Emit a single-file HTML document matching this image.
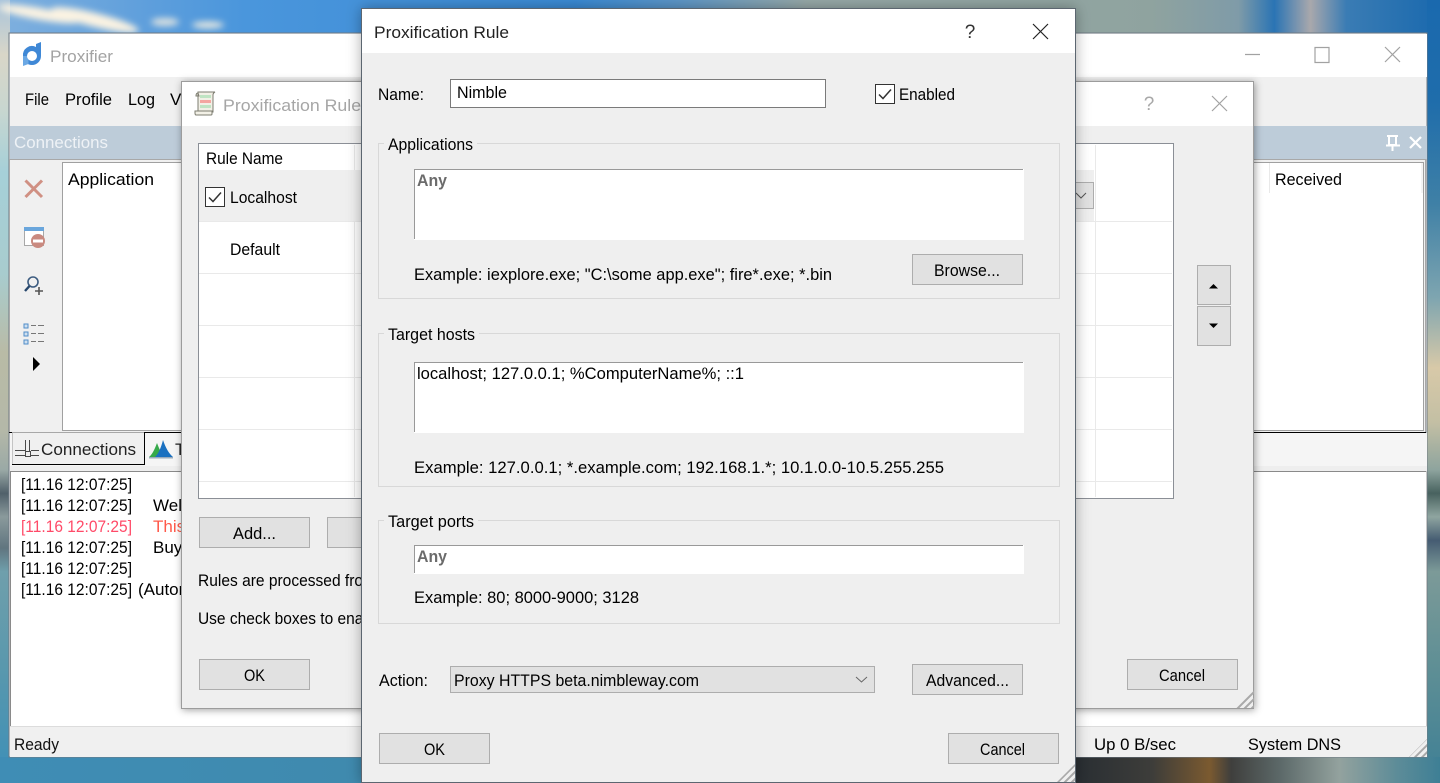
<!DOCTYPE html>
<html><head><meta charset="utf-8"><title>Proxifier</title>
<style>
html,body{margin:0;padding:0;width:1440px;height:783px;overflow:hidden;background:#3f8db5}
svg{display:block}
text{font-family:"Liberation Sans",sans-serif;font-size:17px;fill:#000}
.b{fill:#e1e1e1;stroke:#adadad;stroke-width:1;shape-rendering:crispEdges}
.l{stroke:#e9e9e9;stroke-width:1;shape-rendering:crispEdges}
.g{fill:none;stroke:#d8d8d8;stroke-width:1;shape-rendering:crispEdges}
.c{shape-rendering:crispEdges}
</style></head><body>
<svg width="1440" height="783" viewBox="0 0 1440 783" xmlns="http://www.w3.org/2000/svg">
<defs>
<linearGradient id="top"><stop offset="0" stop-color="#7fb0de"/><stop offset=".1" stop-color="#5f9fdc"/><stop offset=".17" stop-color="#4a96dc"/><stop offset=".4" stop-color="#3a8ad4"/><stop offset=".47" stop-color="#5c96c8"/><stop offset=".56" stop-color="#97a9a8"/><stop offset=".8" stop-color="#8fa39f"/><stop offset=".86" stop-color="#7f9ba8"/><stop offset=".885" stop-color="#2a74b4"/><stop offset=".91" stop-color="#a9a8ac"/><stop offset=".935" stop-color="#3a7cb4"/><stop offset="1" stop-color="#1a69ae"/></linearGradient>
<linearGradient id="left" x2="0" y2="1"><stop offset="0" stop-color="#a8c4dc"/><stop offset=".07" stop-color="#d9d6c8"/><stop offset=".14" stop-color="#c8d6d0"/><stop offset=".22" stop-color="#a6d0d8"/><stop offset=".35" stop-color="#a8ccce"/><stop offset=".45" stop-color="#b9bba6"/><stop offset=".55" stop-color="#b4b8a8"/><stop offset=".6" stop-color="#9aa9a6"/><stop offset=".63" stop-color="#50606a"/><stop offset=".66" stop-color="#8a9a9c"/><stop offset=".7" stop-color="#60757f"/><stop offset=".73" stop-color="#6f9fac"/><stop offset=".85" stop-color="#5a98ad"/><stop offset="1" stop-color="#3c8fb8"/></linearGradient>
<linearGradient id="right" x2="0" y2="1"><stop offset="0" stop-color="#1a69ae"/><stop offset=".13" stop-color="#1f6dab"/><stop offset=".26" stop-color="#3f80a6"/><stop offset=".38" stop-color="#7ea5b0"/><stop offset=".47" stop-color="#d8c9a8"/><stop offset=".54" stop-color="#c3bfa4"/><stop offset=".6" stop-color="#8ea49e"/><stop offset=".63" stop-color="#48625f"/><stop offset=".66" stop-color="#8fa5a0"/><stop offset=".69" stop-color="#455c72"/><stop offset=".73" stop-color="#7c9a98"/><stop offset=".85" stop-color="#5f8f95"/><stop offset="1" stop-color="#3e7f95"/></linearGradient>
<linearGradient id="bot"><stop offset="0" stop-color="#3f8db5"/><stop offset=".25" stop-color="#3f8aae"/><stop offset=".26" stop-color="#3f8aae"/><stop offset=".75" stop-color="#2a2f33"/><stop offset=".8" stop-color="#3d3d3a"/><stop offset=".84" stop-color="#7b5a30"/><stop offset=".855" stop-color="#3f3f3d"/><stop offset=".89" stop-color="#5d6a6a"/><stop offset=".93" stop-color="#93a29e"/><stop offset=".97" stop-color="#5d8c98"/><stop offset="1" stop-color="#3e7f95"/></linearGradient>
<filter id="blur" x="-30%" y="-100%" width="160%" height="300%"><feGaussianBlur stdDeviation="3.500"/></filter>
<filter id="sh" x="-5%" y="-5%" width="110%" height="110%"><feDropShadow dx="0" dy="0" stdDeviation="7" flood-color="#000" flood-opacity=".32"/></filter>
<filter id="sh2" x="-5%" y="-5%" width="110%" height="110%"><feDropShadow dx="1" dy="1" stdDeviation="4" flood-color="#000" flood-opacity=".38"/></filter>
<pattern id="grip" width="5" height="5" patternUnits="userSpaceOnUse" patternTransform="rotate(-45)"><rect width="5" height="2" fill="#a9a9a9"/></pattern>
</defs>

<!-- wallpaper -->
<rect width="1440" height="34" fill="url(#top)"/>
<rect y="0" width="10" height="783" fill="url(#left)"/>
<rect x="1427" y="0" width="13" height="783" fill="url(#right)"/>
<rect y="757" width="1440" height="26" fill="url(#bot)"/>
<g filter="url(#blur)" fill="#fbf3e2">
<ellipse cx="40" cy="14" rx="42" ry="6" transform="rotate(10 40 14)"/><ellipse cx="95" cy="20" rx="45" ry="7" transform="rotate(14 95 20)"/><ellipse cx="165" cy="22" rx="14" ry="4" opacity=".8"/><ellipse cx="208" cy="25" rx="16" ry="3.500" opacity=".9"/>
</g>

<!-- main window -->
<rect x="9" y="33" width="1418" height="724" fill="#f0f0f0" stroke="#6f7a84" class="c"/>
<rect x="10" y="34" width="1417" height="43" fill="#fff" class="c"/>
<g>
<path d="M36 47 V44 L41 42 V56 A9 9 0 0 1 32 65 A9 9 0 0 1 23 56 A9 9 0 0 1 36 47Z" fill="#3f88d6"/>
<path d="M23 56H28.500V64L23 66Z" fill="#6ba8e4"/>
<circle cx="32" cy="56" r="5" fill="#fff"/>
</g>
<text x="50" y="62" style="fill:#a3a3a3" textLength="63" lengthAdjust="spacingAndGlyphs">Proxifier</text>
<path d="M1245 54.500H1260M1315 47.500h14v15h-14zM1385 47L1400 62M1400 47L1385 62" fill="none" stroke="#a2a2a2" stroke-width="1.200"/>
<text x="25" y="105" textLength="24" lengthAdjust="spacingAndGlyphs">File</text>
<text x="65" y="105" textLength="47" lengthAdjust="spacingAndGlyphs">Profile</text>
<text x="128" y="105" textLength="27" lengthAdjust="spacingAndGlyphs">Log</text>
<text x="170" y="105">V</text>
<rect x="10" y="126" width="1417" height="33" fill="#bdccd9" class="c"/>
<text x="14" y="148" style="fill:#eef2f6" textLength="94" lengthAdjust="spacingAndGlyphs">Connections</text>
<path d="M1387 136h11M1389 137v8h7v-8M1386 145.500h14M1392.500 146v5" fill="none" stroke="#fff" stroke-width="2" class="c"/>
<path d="M1410 137L1421 148M1421 137L1410 148" stroke="#fff" stroke-width="2.200"/>
<rect x="9.500" y="159.500" width="1416" height="273" fill="#f0f0f0" stroke="#a8a8a8" class="c"/>
<rect x="62.500" y="162.500" width="1361" height="268" fill="#fff" stroke="#a0a0a0" class="c"/>
<text x="68" y="185" textLength="86" lengthAdjust="spacingAndGlyphs">Application</text>
<path class="l" d="M1269.500 163V193M1422 163V193"/>
<text x="1275" y="185" textLength="67" lengthAdjust="spacingAndGlyphs">Received</text>
<!-- toolbar icons -->
<path d="M25.500 180.500L42 197M42 180.500L25.500 197" stroke="#d09083" stroke-width="3"/>
<rect x="24.500" y="227.500" width="19" height="18" fill="#fff" stroke="#a8a8a8" class="c"/><rect x="24" y="227" width="20" height="4" fill="#6aa6dc" class="c"/>
<circle cx="38" cy="241" r="7" fill="#c98a80"/><rect x="33" y="239.500" width="10" height="3" fill="#fff" class="c"/>
<circle cx="33" cy="282" r="5" fill="none" stroke="#3d5c80" stroke-width="1.600"/><path d="M29.500 286L25 291" stroke="#27476c" stroke-width="2.400"/><path d="M39 287v8M35 291h8" stroke="#555" stroke-width="1.600"/>
<g class="c"><rect x="24" y="324" width="4" height="4" stroke="#4f8dc8" fill="#cfe0f0"/><rect x="24" y="332" width="4" height="4" stroke="#4f8dc8" fill="#cfe0f0"/><rect x="24" y="340" width="4" height="4" stroke="#4f8dc8" fill="#cfe0f0"/>
<path d="M31 325.500h5M38 325.500h6M31 333.500h5M38 333.500h6M31 341.500h5M38 341.500h6" stroke="#777" fill="none"/></g>
<path d="M33 357L40 364L33 371Z" fill="#000"/>
<!-- tabs -->
<rect x="10" y="433" width="1417" height="33" fill="#f5f5f5" class="c"/>
<rect x="10" y="466" width="1417" height="5" fill="#eeeeee" class="c"/>
<rect x="9" y="432" width="3" height="1" fill="#000" class="c"/>
<rect x="144" y="432" width="1282" height="1" fill="#000" class="c"/>
<rect x="12" y="433" width="132" height="31" fill="#f0f0f0" class="c"/>
<rect x="12" y="433" width="1" height="31" fill="#c4c4c4" class="c"/>
<rect x="12" y="464" width="133" height="1" fill="#000" class="c"/>
<rect x="144" y="432" width="1" height="33" fill="#000" class="c"/>
<path d="M25.500 440v11M29.500 440v11M15 450.500h10M31 450.500h8M15 455.500h10M31 455.500h8" stroke="#4a4a4a" fill="none" class="c"/><rect x="25.500" y="451.500" width="5" height="5" fill="none" stroke="#4a4a4a" class="c"/>
<path d="M149 457Q153 454 157 443Q161 454 165 457Z" fill="#36a94a"/><path d="M155 457Q160 452 163 440Q167 452 173 457Z" fill="#1a70c0"/>
<rect x="149" y="457" width="24" height="1.500" fill="#9ab" class="c"/>
<text x="41" y="455" textLength="95" lengthAdjust="spacingAndGlyphs" style="fill:#222">Connections</text>
<text x="175" y="455" style="fill:#222">T</text>
<!-- log -->
<rect x="10" y="471" width="1416" height="255" fill="#fff" class="c"/>
<path d="M10.500 726V471.500H1426" fill="none" stroke="#8a8a8a" class="c"/>
<rect x="1426" y="471" width="1" height="256" fill="#c8c8c8" class="c"/>
<g>
<text x="21" y="490" textLength="111" lengthAdjust="spacingAndGlyphs">[11.16 12:07:25]</text>
<text x="21" y="511" textLength="111" lengthAdjust="spacingAndGlyphs">[11.16 12:07:25]</text><text x="153" y="511">Welcome</text>
<text x="21" y="532" textLength="111" lengthAdjust="spacingAndGlyphs" style="fill:#ff4a68">[11.16 12:07:25]</text><text x="153" y="532" style="fill:#ff5a4a">This</text>
<text x="21" y="553" textLength="111" lengthAdjust="spacingAndGlyphs">[11.16 12:07:25]</text><text x="153" y="553">Buy</text>
<text x="21" y="574" textLength="111" lengthAdjust="spacingAndGlyphs">[11.16 12:07:25]</text>
<text x="21" y="595" textLength="111" lengthAdjust="spacingAndGlyphs">[11.16 12:07:25]</text><text x="138" y="595">(Automatic</text>
</g>
<!-- status -->
<rect x="10" y="726" width="1417" height="1" fill="#dcdcdc" class="c"/>
<rect x="10" y="727" width="1417" height="30" fill="#f0f0f0" class="c"/>
<text x="14" y="750" textLength="45" lengthAdjust="spacingAndGlyphs" style="fill:#111">Ready</text>
<text x="1094" y="750" textLength="82" lengthAdjust="spacingAndGlyphs">Up 0 B/sec</text>
<text x="1248" y="750" textLength="93" lengthAdjust="spacingAndGlyphs">System DNS</text>
<path d="M1427 739V757H1409Z" fill="url(#grip)"/>

<!-- rules dialog -->
<g filter="url(#sh2)"><rect x="181.500" y="81.500" width="1072" height="627" fill="#efefef" stroke="#9c9c9c" class="c"/></g>
<rect x="182" y="82" width="1071" height="44" fill="#fff" class="c"/>
<g>
<path d="M198 93q-2 0-2 3h3zM198 92h17q-2 1-2 3v17h-15V95q0-2 0-3z" fill="#f2f0e6" stroke="#7c7c70"/>
<rect x="200" y="95" width="11" height="3" fill="#bfe4c3" class="c"/><rect x="200" y="100" width="11" height="3" fill="#f4a6a0" class="c"/><rect x="200" y="105" width="11" height="3" fill="#bfe4c3" class="c"/>
<path d="M195 111h17v3q0 1-1 1H196q-1 0-1-2z" fill="#f2f0e6" stroke="#7c7c70"/>
</g>
<text x="223" y="111" textLength="147" lengthAdjust="spacingAndGlyphs" style="fill:#a6a6a6">Proxification Rules</text>
<text x="1149" y="110" text-anchor="middle" style="font-size:19px;fill:#a8a8a8">?</text>
<path d="M1212 96L1227 111M1227 96L1212 111" stroke="#a2a2a2" stroke-width="1.200"/>
<rect x="198.500" y="143.500" width="975" height="355" fill="#fff" stroke="#8b8f96" class="c"/>
<rect x="199" y="170" width="895" height="52" fill="#efefef" class="c"/>
<path class="l" d="M354.500 145V170M354.500 222V497M1095.500 145V497M199 221.500H1172M199 273.500H1172M199 325.500H1172M199 377.500H1172M199 429.500H1172M199 481.500H1172"/>
<text x="206" y="164" textLength="77" lengthAdjust="spacingAndGlyphs">Rule Name</text>
<rect x="205.500" y="187.500" width="19" height="19" fill="#fff" stroke="#333" class="c"/>
<path d="M209 197.500L213 201.500L221 192.500" fill="none" stroke="#333" stroke-width="1.500"/>
<text x="230" y="203" textLength="67" lengthAdjust="spacingAndGlyphs">Localhost</text>
<text x="230" y="255" textLength="50" lengthAdjust="spacingAndGlyphs">Default</text>
<rect x="1060.500" y="182.500" width="33" height="26" class="b"/>
<path d="M1076 193l5 5 5-5" fill="none" stroke="#555"/>
<rect x="1197.500" y="265.500" width="33" height="39" class="b"/><path d="M1209 288.500L1213.500 284L1218 288.500Z" fill="#000"/>
<rect x="1197.500" y="306.500" width="33" height="39" class="b"/><path d="M1209 323.500L1213.500 328L1218 323.500Z" fill="#000"/>
<rect x="199.500" y="517.500" width="110" height="30" class="b"/><text x="233" y="539" textLength="43" lengthAdjust="spacingAndGlyphs">Add...</text>
<rect x="327.500" y="517.500" width="110" height="30" class="b"/>
<text x="198" y="586" textLength="178" lengthAdjust="spacingAndGlyphs">Rules are processed from</text>
<text x="198" y="624" textLength="186" lengthAdjust="spacingAndGlyphs">Use check boxes to enable</text>
<rect x="199.500" y="659.500" width="110" height="30" class="b"/><text x="244" y="681" textLength="21" lengthAdjust="spacingAndGlyphs">OK</text>
<rect x="1127.500" y="659.500" width="110" height="30" class="b"/><text x="1159" y="681" textLength="46" lengthAdjust="spacingAndGlyphs">Cancel</text>
<path d="M1254 690V708H1236Z" fill="url(#grip)"/>

<!-- front dialog -->
<g filter="url(#sh)"><rect x="361.500" y="8.500" width="714" height="774" fill="#efefef" stroke="#5c6670" class="c"/></g>
<rect x="362" y="9" width="713" height="44" fill="#fff" class="c"/>
<text x="374" y="38" textLength="135" lengthAdjust="spacingAndGlyphs" style="fill:#222">Proxification Rule</text>
<text x="970" y="38" text-anchor="middle" style="font-size:19px;fill:#333">?</text>
<path d="M1033 24L1048 39M1048 24L1033 39" stroke="#222" stroke-width="1.200"/>
<text x="378" y="100" textLength="46" lengthAdjust="spacingAndGlyphs">Name:</text>
<rect x="450.500" y="79.500" width="375" height="28" fill="#fff" stroke="#7a7a7a" class="c"/>
<text x="457" y="98" textLength="50" lengthAdjust="spacingAndGlyphs">Nimble</text>
<rect x="875.500" y="84.500" width="19" height="19" fill="#fff" stroke="#333" class="c"/>
<path d="M879 94.500L883 98.500L891 89.500" fill="none" stroke="#333" stroke-width="1.500"/>
<text x="899" y="100" textLength="56" lengthAdjust="spacingAndGlyphs">Enabled</text>

<rect x="378.500" y="143.500" width="681" height="155" class="g"/>
<rect x="384" y="138" width="93" height="12" fill="#efefef" class="c"/>
<text x="388" y="150" textLength="85" lengthAdjust="spacingAndGlyphs">Applications</text>
<rect x="414" y="169" width="610" height="71" fill="#fff" class="c"/>
<path d="M414.500 239V169.500H1023" fill="none" stroke="#999" class="c"/>
<text x="417" y="186" textLength="30" lengthAdjust="spacingAndGlyphs" style="fill:#6b6b6b;font-weight:bold">Any</text>
<text x="414" y="280" textLength="418" lengthAdjust="spacingAndGlyphs">Example: iexplore.exe; "C:\some app.exe"; fire*.exe; *.bin</text>
<rect x="912.500" y="254.500" width="110" height="30" class="b"/><text x="934" y="276" textLength="66" lengthAdjust="spacingAndGlyphs">Browse...</text>

<rect x="378.500" y="333.500" width="681" height="153" class="g"/>
<rect x="384" y="328" width="95" height="12" fill="#efefef" class="c"/>
<text x="388" y="340" textLength="87" lengthAdjust="spacingAndGlyphs">Target hosts</text>
<rect x="414" y="362" width="610" height="71" fill="#fff" class="c"/>
<path d="M414.500 432V362.500H1023" fill="none" stroke="#999" class="c"/>
<text x="417" y="379" textLength="327" lengthAdjust="spacingAndGlyphs">localhost; 127.0.0.1; %ComputerName%; ::1</text>
<text x="414" y="473" textLength="530" lengthAdjust="spacingAndGlyphs">Example: 127.0.0.1; *.example.com; 192.168.1.*; 10.1.0.0-10.5.255.255</text>

<rect x="378.500" y="520.500" width="681" height="103" class="g"/>
<rect x="384" y="515" width="94" height="12" fill="#efefef" class="c"/>
<text x="388" y="527" textLength="86" lengthAdjust="spacingAndGlyphs">Target ports</text>
<rect x="414" y="545" width="610" height="29" fill="#fff" class="c"/>
<path d="M414.500 573V545.500H1023" fill="none" stroke="#999" class="c"/>
<text x="417" y="562" textLength="30" lengthAdjust="spacingAndGlyphs" style="fill:#6b6b6b;font-weight:bold">Any</text>
<text x="414" y="603" textLength="225" lengthAdjust="spacingAndGlyphs">Example: 80; 8000-9000; 3128</text>

<text x="379" y="686" textLength="49" lengthAdjust="spacingAndGlyphs">Action:</text>
<rect x="450.500" y="666.500" width="424" height="26" class="b"/>
<text x="454" y="686" textLength="245" lengthAdjust="spacingAndGlyphs">Proxy HTTPS beta.nimbleway.com</text>
<path d="M856 677l5.500 5 5.500-5" fill="none" stroke="#666"/>
<rect x="912.500" y="664.500" width="110" height="30" class="b"/><text x="926" y="686" textLength="83" lengthAdjust="spacingAndGlyphs">Advanced...</text>
<rect x="379.500" y="733.500" width="110" height="30" class="b"/><text x="424" y="755" textLength="21" lengthAdjust="spacingAndGlyphs">OK</text>
<rect x="948.500" y="733.500" width="110" height="30" class="b"/><text x="980" y="755" textLength="45" lengthAdjust="spacingAndGlyphs">Cancel</text>
<path d="M1075 764V782H1057Z" fill="url(#grip)"/>
</svg>
</body></html>
